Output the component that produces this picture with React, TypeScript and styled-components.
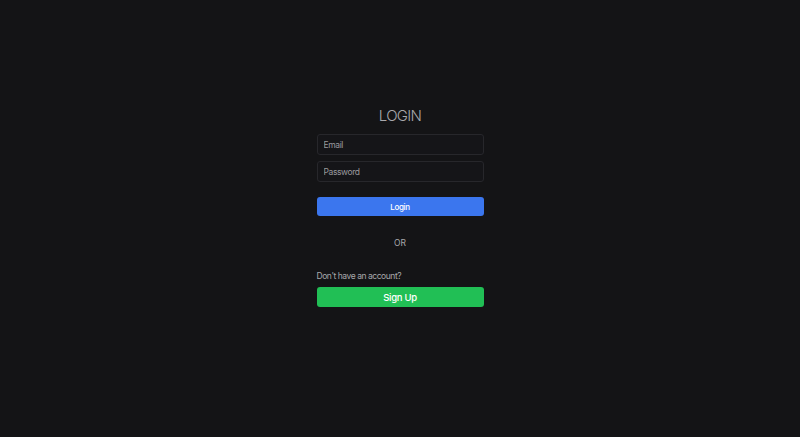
import styled, { createGlobalStyle } from "styled-components";

const GlobalStyle = createGlobalStyle`
  html, body {
    margin: 0;
    padding: 0;
    background: #141416;
  }
  body {
    font-family: Inter, "Noto Sans", sans-serif;
  }
`;

const Page = styled.div`
  width: 100%;
  height: 437px;
  display: flex;
  justify-content: center;
  padding-top: 106px;
  box-sizing: border-box;
`;

const Form = styled.div`
  width: 167px;
  display: flex;
  flex-direction: column;
`;

const Title = styled.h1`
  margin: 0 0 8px;
  text-align: center;
  font-size: 15px;
  font-weight: 300;
  line-height: 20px;
  color: #a8a8ab;
  letter-spacing: -0.7px;
`;

const Input = styled.input<{ $gap: number }>`
  height: 21px;
  box-sizing: border-box;
  margin-bottom: ${(p) => p.$gap}px;
  padding: 0 6px;
  background: #151518;
  border: 1px solid #27272b;
  border-radius: 3px;
  color: #ddd;
  font-family: Inter, "Noto Sans", sans-serif;
  font-size: 8.5px;
  letter-spacing: -0.4px;
  outline: none;

  &::placeholder {
    color: #9a9a9f;
  }
`;

const Button = styled.button<{ $color: string; $size: number; $height: number }>`
  height: ${(p) => p.$height}px;
  border: none;
  border-radius: 3px;
  background: ${(p) => p.$color};
  color: #fff;
  font-family: Inter, "Noto Sans", sans-serif;
  font-size: ${(p) => p.$size}px;
  font-weight: 500;
  letter-spacing: -0.3px;
  padding: 0;
  cursor: pointer;
`;

const Or = styled.div`
  margin: 22px 0 18px;
  text-align: center;
  font-size: 8.5px;
  line-height: 10px;
  color: #a8a8ab;
`;

const Hint = styled.div`
  margin: 5px 0 6px;
  font-size: 8.5px;
  line-height: 10px;
  letter-spacing: -0.45px;
  color: #a8a8ab;
`;

export default function App() {
  return (
    <>
      <GlobalStyle />
      <Page>
        <Form>
          <Title>LOGIN</Title>
          <Input placeholder="Email" $gap={6} />
          <Input placeholder="Password" $gap={15} />
          <Button $color="#3b76ee" $size={8} $height={19}>
            Login
          </Button>
          <Or>OR</Or>
          <Hint>Don't have an account?</Hint>
          <Button $color="#21bf55" $size={9.5} $height={20}>
            Sign Up
          </Button>
        </Form>
      </Page>
    </>
  );
}
